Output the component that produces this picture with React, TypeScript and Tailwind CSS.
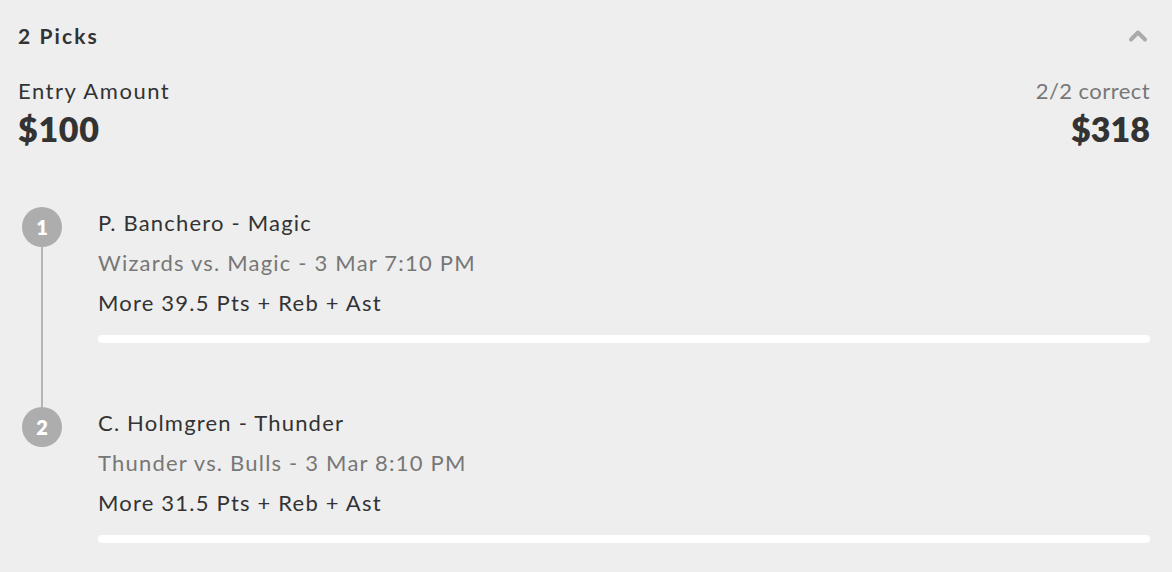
import { ChevronUp } from "lucide-react";

type Pick = {
  n: number;
  player: string;
  game: string;
  line: string;
};

const picks: Pick[] = [
  { n: 1, player: "P. Banchero - Magic", game: "Wizards vs. Magic - 3 Mar 7:10 PM", line: "More 39.5 Pts + Reb + Ast" },
  { n: 2, player: "C. Holmgren - Thunder", game: "Thunder vs. Bulls - 3 Mar 8:10 PM", line: "More 31.5 Pts + Reb + Ast" },
];

function PickRow({ pick, last }: { pick: Pick; last: boolean }) {
  return (
    <div className="flex">
      {/* timeline column */}
      <div className="flex w-[80px] shrink-0 flex-col items-center pr-[32px]">
        <div className="flex h-10 w-10 items-center justify-center rounded-full bg-[#adadad] text-[20px] font-extrabold text-white">
          {pick.n}
        </div>
        {!last && <div className="w-[2px] flex-1 bg-[#b5b5b5]" />}
      </div>

      {/* details */}
      <div className={`-mt-1 flex-1 tracking-[0.075em] ${last ? "pb-[29px]" : "pb-[64px]"}`}>
        <div className="text-[22px] leading-[40px] text-[#333]">{pick.player}</div>
        <div className="text-[22px] leading-[40px] text-[#777]">{pick.game}</div>
        <div className="text-[22px] leading-[40px] text-[#333]">{pick.line}</div>
        <div className="mt-3 h-2 w-full rounded-full bg-white" />
      </div>
    </div>
  );
}

export default function App() {
  return (
    <div
      className="min-h-screen w-full bg-[#eeeeee] pl-[18px] pr-[22px]"
      style={{ fontFamily: "Lato, 'Noto Sans', sans-serif" }}
    >
      {/* header */}
      <div className="flex h-[72px] items-center justify-between">
        <span className="text-[21px] font-bold tracking-[0.1em] text-[#333]">2 Picks</span>
        <ChevronUp className="-mr-[2px] h-7 w-7 text-[#aaaaaa]" strokeWidth={3.4} />
      </div>

      {/* amounts */}
      <div className="flex items-start justify-between">
        <div className="flex flex-col">
          <span className="text-[22px] leading-[38px] tracking-[0.07em] text-[#333]">Entry Amount</span>
          <span className="text-[34px] font-extrabold leading-[38px] tracking-[0.02em] text-[#333]">$100</span>
        </div>
        <div className="flex flex-col items-end">
          <span className="text-[22px] leading-[38px] tracking-[0.02em] text-[#777]">2/2 correct</span>
          <span className="text-[34px] font-extrabold leading-[38px] text-[#333]">$318</span>
        </div>
      </div>

      {/* picks */}
      <div className="mt-[59px] flex flex-col">
        {picks.map((p, i) => (
          <PickRow key={p.n} pick={p} last={i === picks.length - 1} />
        ))}
      </div>
    </div>
  );
}
